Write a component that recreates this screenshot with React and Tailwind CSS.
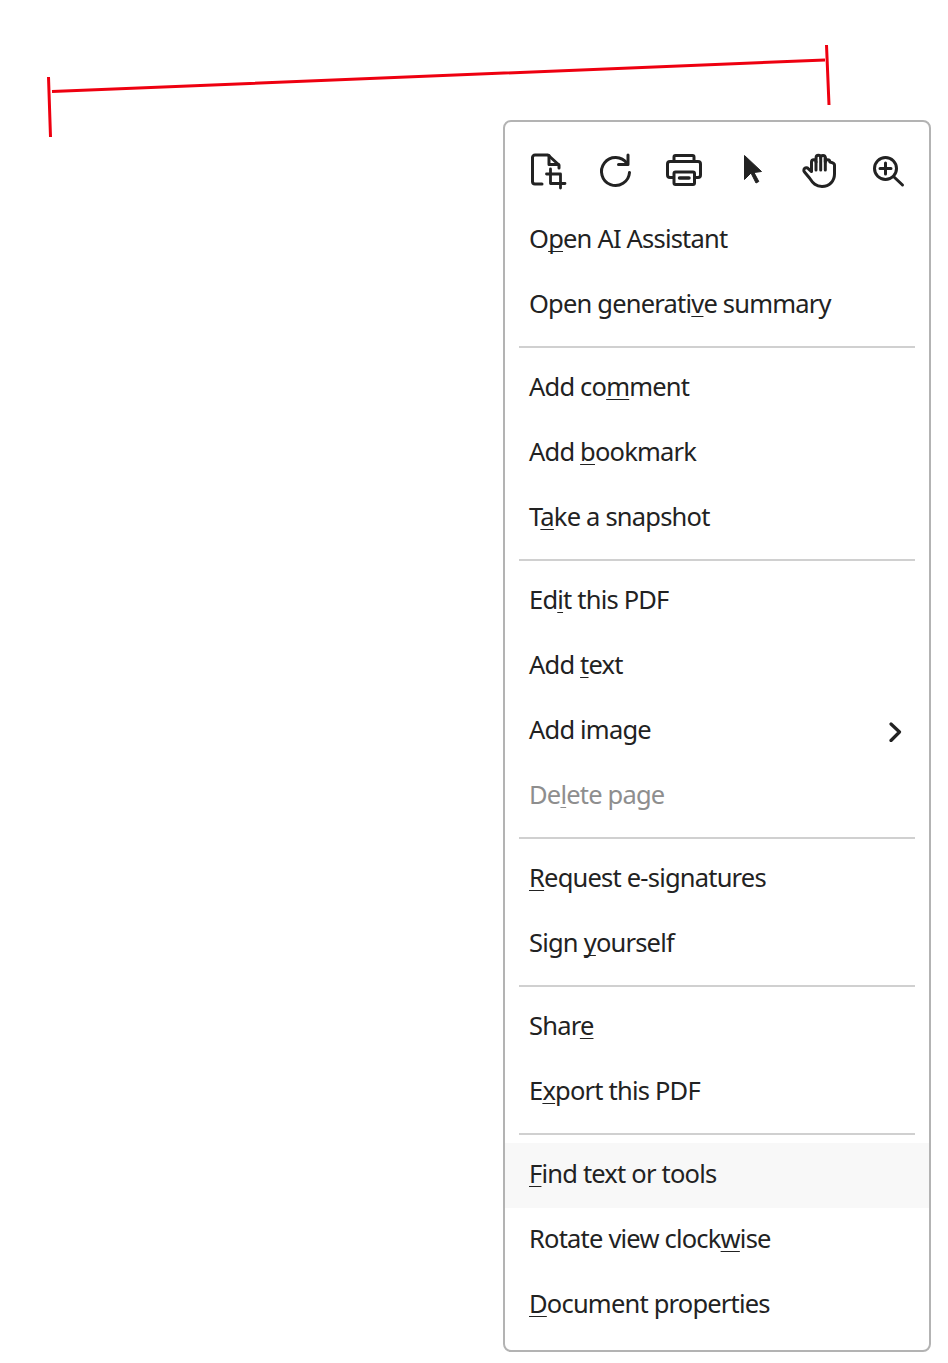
import React from "react";

const S = { fill: "none", stroke: "#222", strokeWidth: 3, strokeLinecap: "round", strokeLinejoin: "round" };

const icons = [
  <svg key="a" width="40" height="40" viewBox="0 0 40 40" {...S}>
    <path d="M14 34H7a2.500 2.500 0 0 1-2.500-2.500V7.500A2.500 2.500 0 0 1 7 5h13L31 15V18" />
    <path d="M21 5.500V14.500H30.500" />
    <path d="M22.500 19V33.500H37M18.500 24H32.500V38" strokeWidth="2.800" />
  </svg>,
  <svg key="b" width="40" height="40" viewBox="0 0 40 40" {...S}>
    <path d="M31 13.500A14 14 0 1 0 33.500 22.500" />
    <path d="M32 5V14.500H22.500" />
  </svg>,
  <svg key="c" width="40" height="40" viewBox="0 0 40 40" {...S}>
    <path d="M10 11.500V7a1.500 1.500 0 0 1 1.500-1.500h17A1.500 1.500 0 0 1 30 7V11.500" />
    <path d="M9.500 27.500H6a2.500 2.500 0 0 1-2.500-2.500V14a2.500 2.500 0 0 1 2.500-2.500h28a2.500 2.500 0 0 1 2.500 2.500v11a2.500 2.500 0 0 1-2.500 2.500H30.500" />
    <rect x="10" y="22" width="20.500" height="12.500" rx="1.500" />
    <path d="M15.500 28H25" strokeWidth="3.500" />
  </svg>,
  <svg key="d" width="40" height="40" viewBox="0 0 40 40">
    <path d="M12.500 5.500 29.500 21.500 22 22.500 26.800 31.500 24 33 19 23 12.500 29.500Z" fill="#222" stroke="#222" strokeWidth="1" strokeLinejoin="round" />
  </svg>,
  <svg key="e" width="40" height="40" viewBox="0 0 40 40" {...S}>
    <path d="M10 28 5 22a2.500 2.500 0 0 1 3.700-3.400L12 21.500V12a2.300 2.300 0 0 1 4.600 0V7.500a2.300 2.300 0 0 1 4.600 0V7.800a2.300 2.300 0 0 1 4.600 0V12a2.300 2.300 0 0 1 4.600 0c0 0 4.600 1 4.600 3v9c0 7-5 12.500-12.500 12.500-6 0-9-3-12.500-8.500Z" transform="translate(-0.500 0)" />
    <path d="M16 12V20M20.700 8V20M25.300 8V20" />
  </svg>,
  <svg key="f" width="40" height="40" viewBox="0 0 40 40" {...S}>
    <circle cx="17.500" cy="18.500" r="11" />
    <path d="M25.500 26.500 34.500 35" />
    <path d="M17.500 13V24M12 18.500H23" />
  </svg>,
];

const Item = ({ pre = "", u, post = "", disabled, active, chevron }) => (
  <div className={`flex h-[65px] items-center justify-between pl-6 pr-[27px] ${active ? "bg-[#f8f8f8]" : ""}`}>
    <span className={`-mt-[5px] ${disabled ? "text-[#8e8e8e]" : "text-[#222222]"}`}>
      {pre}
      <span className="underline decoration-1 underline-offset-[3px] [text-decoration-skip-ink:none]">{u}</span>
      {post}
    </span>
    {chevron && (
      <svg width="14" height="20" viewBox="0 0 14 20" fill="none" stroke="#222" strokeWidth="3.200" strokeLinecap="round" strokeLinejoin="round">
        <path d="M3 2 11.500 10 3 18.500" />
      </svg>
    )}
  </div>
);

const Sep = () => <div className="mx-3.5 my-2 h-0.5 bg-[#d0d0d0]" />;

export default function App() {
  return (
    <div className="h-[1363px] w-[948px] overflow-hidden bg-white font-['Noto_Sans',sans-serif] text-[25.500px] tracking-[-0.8px]">
      <svg className="block overflow-visible" width="948" height="120" viewBox="0 0 948 120" fill="none" stroke="#ee0010" strokeWidth="3">
        <path d="M48.500 77 50.500 137M52 91.500 825 60M826.500 45 829 105" />
      </svg>
      <div className="ml-[503px] w-[428px] rounded-lg border-2 border-[#b3b3b3] bg-white pb-3">
        <div className="flex pl-[9px] pt-7 pb-[18px]">
          {icons.map((icon) => (
            <div key={icon.key} className="flex h-10 w-[68px] items-center justify-center">{icon}</div>
          ))}
        </div>
        <Item pre="O" u="p" post="en AI Assistant" />
        <Item pre="Open generati" u="v" post="e summary" />
        <Sep />
        <Item pre="Add co" u="m" post="ment" />
        <Item pre="Add " u="b" post="ookmark" />
        <Item pre="T" u="a" post="ke a snapshot" />
        <Sep />
        <Item pre="Ed" u="i" post="t this PDF" />
        <Item pre="Add " u="t" post="ext" />
        <Item pre="Add image" u="" chevron />
        <Item pre="De" u="l" post="ete page" disabled />
        <Sep />
        <Item u="R" post="equest e-signatures" />
        <Item pre="Sign " u="y" post="ourself" />
        <Sep />
        <Item pre="Shar" u="e" />
        <Item pre="E" u="x" post="port this PDF" />
        <Sep />
        <Item u="F" post="ind text or tools" active />
        <Item pre="Rotate view clock" u="w" post="ise" />
        <Item u="D" post="ocument properties" />
      </div>
    </div>
  );
}
